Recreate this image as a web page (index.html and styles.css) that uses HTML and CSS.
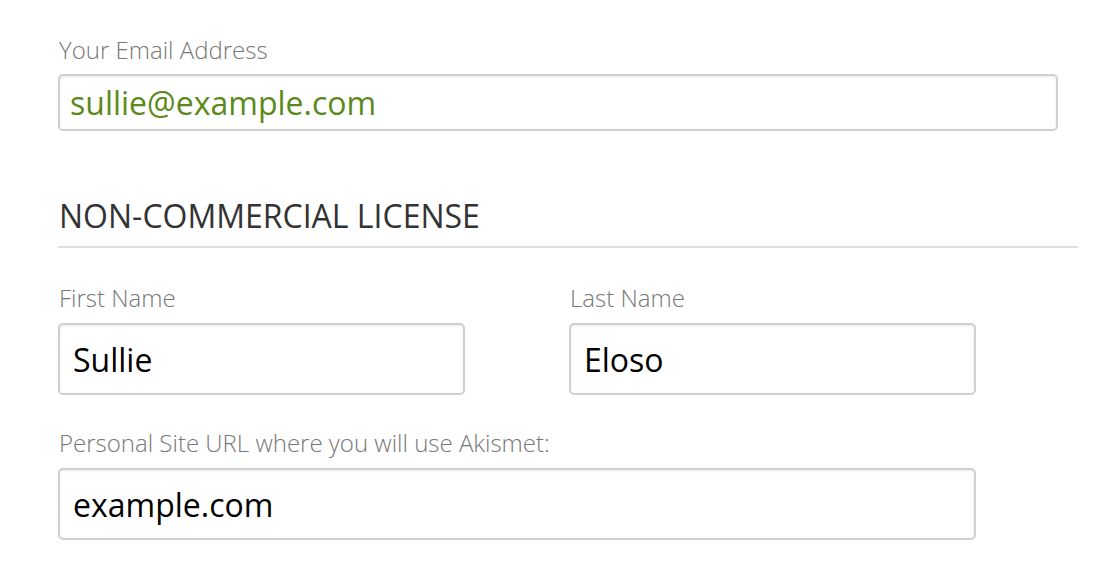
FILE: index.html
```html
<!DOCTYPE html>
<html>
<head>
<meta charset="utf-8">
<link rel="stylesheet" href="styles.css">
</head>
<body>
<div class="form">
  <div class="field">
    <label class="label label-first">Your Email Address</label>
    <div class="input input-email">sullie@example.com</div>
  </div>
  <h2 class="section-title">NON-COMMERCIAL LICENSE</h2>
  <div class="row">
    <div class="field half">
      <label class="label">First Name</label>
      <div class="input input-tall">Sullie</div>
    </div>
    <div class="field half">
      <label class="label">Last Name</label>
      <div class="input input-tall">Eloso</div>
    </div>
  </div>
  <div class="field url">
    <label class="label">Personal Site URL where you will use Akismet:</label>
    <div class="input input-tall">example.com</div>
  </div>
</div>
</body>
</html>
```

FILE: styles.css
```css
html, body {
  margin: 0;
  padding: 0;
  background: #fff;
}
body {
  font-family: "Open Sans", "Liberation Sans", sans-serif;
}
.form {
  padding: 35px 0 0 58px;
  width: 1020px;
}
.field {
  display: flex;
  flex-direction: column;
}
.label {
  font-size: 24px;
  font-weight: 300;
  color: #777;
  line-height: 30px;
  margin-left: 1px;
  margin-bottom: 10px;
}
.label-first {
  margin-bottom: 9px;
}
.input {
  box-sizing: border-box;
  border: 2px solid #d0d0d0;
  border-radius: 5px;
  box-shadow: inset 0 1px 3px rgba(0,0,0,0.08);
  font-size: 32px;
  color: #000;
  display: flex;
  align-items: center;
}
.input-email {
  width: 1000px;
  height: 57px;
  padding-left: 10px;
  color: #5b8a1b;
}
.input-tall {
  height: 72px;
  padding-left: 13px;
}
.section-title {
  margin: 65px 0 0 0;
  font-size: 32px;
  font-weight: 400;
  color: #333;
  line-height: 40px;
  padding: 0 0 10px 1px;
  border-bottom: 2px solid #ddd;
  width: 1019px;
}
.row {
  display: flex;
  gap: 104px;
  margin-top: 35px;
}
.half {
  width: 407px;
}
.half .input {
  width: 407px;
}
.url {
  margin-top: 33px;
}
.url .input {
  width: 918px;
}
```
